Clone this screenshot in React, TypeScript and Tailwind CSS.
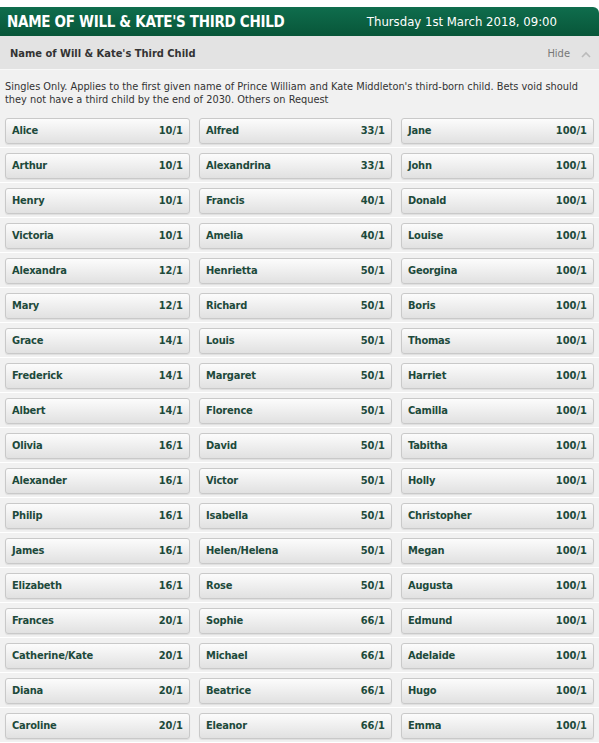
import React from "react";

const rows: [string, string, string, string, string, string][] = [
  ["Alice", "10/1", "Alfred", "33/1", "Jane", "100/1"],
  ["Arthur", "10/1", "Alexandrina", "33/1", "John", "100/1"],
  ["Henry", "10/1", "Francis", "40/1", "Donald", "100/1"],
  ["Victoria", "10/1", "Amelia", "40/1", "Louise", "100/1"],
  ["Alexandra", "12/1", "Henrietta", "50/1", "Georgina", "100/1"],
  ["Mary", "12/1", "Richard", "50/1", "Boris", "100/1"],
  ["Grace", "14/1", "Louis", "50/1", "Thomas", "100/1"],
  ["Frederick", "14/1", "Margaret", "50/1", "Harriet", "100/1"],
  ["Albert", "14/1", "Florence", "50/1", "Camilla", "100/1"],
  ["Olivia", "16/1", "David", "50/1", "Tabitha", "100/1"],
  ["Alexander", "16/1", "Victor", "50/1", "Holly", "100/1"],
  ["Philip", "16/1", "Isabella", "50/1", "Christopher", "100/1"],
  ["James", "16/1", "Helen/Helena", "50/1", "Megan", "100/1"],
  ["Elizabeth", "16/1", "Rose", "50/1", "Augusta", "100/1"],
  ["Frances", "20/1", "Sophie", "66/1", "Edmund", "100/1"],
  ["Catherine/Kate", "20/1", "Michael", "66/1", "Adelaide", "100/1"],
  ["Diana", "20/1", "Beatrice", "66/1", "Hugo", "100/1"],
  ["Caroline", "20/1", "Eleanor", "66/1", "Emma", "100/1"],
];

function Btn({ name, odds, w }: { name: string; odds: string; w: string }) {
  return (
    <div
      className={`${w} h-[26px] flex items-center justify-between px-[6px] rounded-[3px] border border-[#c9c9c9] bg-gradient-to-b from-[#fcfcfc] to-[#e1e1e1] shadow-[0_1px_1px_rgba(0,0,0,0.08)] text-[11px] font-bold text-[#1d4a3b]`}
    >
      <span className="tracking-[-0.2px]">{name}</span>
      <span>{odds}</span>
    </div>
  );
}

export default function App() {
  return (
    <div
      className="w-[599px] h-[743px] bg-white overflow-hidden pt-[7px]"
      style={{ fontFamily: '"DejaVu Sans Condensed", "DejaVu Sans", sans-serif' }}
    >
      <div className="w-[599px]">
        <div className="h-[29px] flex items-center justify-between pl-[7px] pr-[42px] pt-[1px] rounded-tr-[6px] bg-gradient-to-b from-[#0f6d4d] to-[#085639] text-white">
          <span className="text-[15px] font-bold tracking-[-0.3px]">NAME OF WILL &amp; KATE'S THIRD CHILD</span>
          <span className="text-[13px]">Thursday 1st March 2018, 09:00</span>
        </div>
        <div className="h-[34px] flex items-center justify-between pl-[10px] pr-[8px] pt-[3px] bg-[#e3e3e3] border-b border-[#f8f8f8]">
          <span className="text-[11px] font-bold text-[#333]">Name of Will &amp; Kate's Third Child</span>
          <span className="flex items-center gap-[11px] text-[11px] text-[#777]">
            Hide
            <svg width="10" height="7" viewBox="0 0 10 7" fill="none">
              <path d="M1 6 L5 2 L9 6" stroke="#bbbbbb" strokeWidth="1.6" />
            </svg>
          </span>
        </div>
        <div className="bg-[#f1f1f1]">
          <div className="px-[5px] pt-[10px] pb-[7px] text-[10.9px] leading-[13px] text-[#333]">
            Singles Only. Applies to the first given name of Prince William and Kate Middleton's third-born child. Bets void should they not have a third child by the end of 2030. Others on Request
          </div>
          {rows.map((r, i) => (
            <div key={i} className="flex gap-[9px] pl-[5px] pt-[5px] pb-[3px] border-b border-white">
              <Btn name={r[0]} odds={r[1]} w="w-[185px]" />
              <Btn name={r[2]} odds={r[3]} w="w-[193px]" />
              <Btn name={r[4]} odds={r[5]} w="w-[193px]" />
            </div>
          ))}
        </div>
      </div>
    </div>
  );
}
